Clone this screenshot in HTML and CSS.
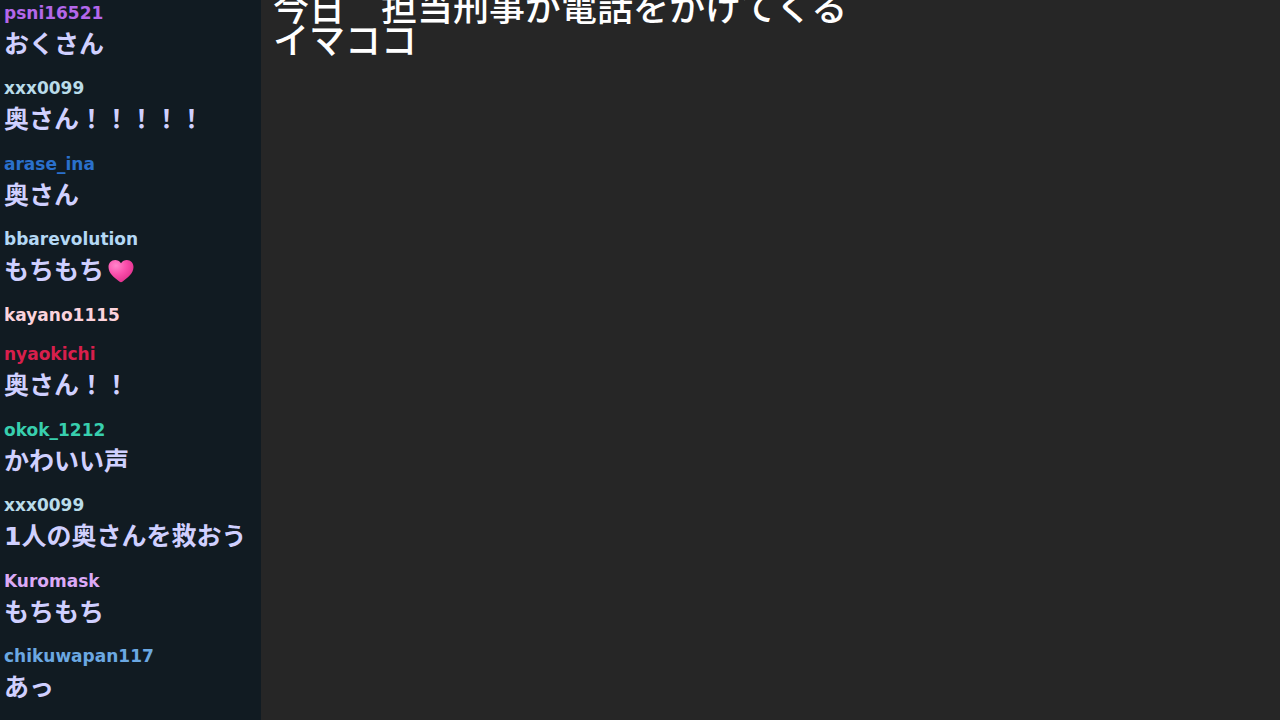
FILE: index.html
```html
<!DOCTYPE html>
<html lang="ja">
<head>
  <meta charset="UTF-8">
  <meta name="viewport" content="width=device-width, initial-scale=1.0">
  <title>配信チャット</title>
  <link rel="stylesheet" href="styles.css">
</head>
<body>
  <ul class="chat">
    <li>
      <span class="name purple">psni16521</span>
      <p>おくさん</p>
    </li>
    <li>
      <span class="name pale">xxx0099</span>
      <p>奥さん！！！！！</p>
    </li>
    <li>
      <span class="name blue">arase_ina</span>
      <p>奥さん</p>
    </li>
    <li>
      <span class="name pale-blue">bbarevolution</span>
      <p>もちもち<svg class="heart" viewBox="0 0 26 24" role="img" aria-label="ハート">
        <defs>
          <radialGradient id="pink" cx="0.3" cy="0.25" r="0.8">
            <stop offset="0" stop-color="#ff86cb"/>
            <stop offset="0.5" stop-color="#fb4fac"/>
            <stop offset="1" stop-color="#e02f8c"/>
          </radialGradient>
        </defs>
        <path fill="url(#pink)" d="M13 4.200C11.500 1.900 9.500 1 7.200 1C3.300 1 .5 4 .5 8C.5 14.500 6.500 18.500 11.300 22.600Q13 24 14.700 22.600C19.500 18.500 25.500 14.500 25.500 8C25.500 4 22.700 1 18.800 1C16.500 1 14.500 1.900 13 4.200Z"/>
      </svg></p>
    </li>
    <li>
      <span class="name pink">kayano1115</span>
    </li>
    <li>
      <span class="name red">nyaokichi</span>
      <p>奥さん！！</p>
    </li>
    <li>
      <span class="name green">okok_1212</span>
      <p>かわいい声</p>
    </li>
    <li>
      <span class="name pale">xxx0099</span>
      <p>1人の奥さんを救おう</p>
    </li>
    <li>
      <span class="name lilac">Kuromask</span>
      <p>もちもち</p>
    </li>
    <li>
      <span class="name sky">chikuwapan117</span>
      <p>あっ</p>
    </li>
  </ul>

  <main class="memo">
    <p>今日　担当刑事が電話をかけてくる<br>イマココ</p>
  </main>
</body>
</html>
```
FILE: styles.css
```css
* {
  box-sizing: border-box;
}
body {
  display: flex;
  height: 100vh;
  margin: 0;
  overflow: hidden;
  background-color: #262626;
  font-family: "DejaVu Sans", "Noto Sans CJK JP", sans-serif;
}
p {
  margin: 0;
}

.chat {
  display: flex;
  flex-direction: column;
  justify-content: space-between;
  flex: 0 0 261px;
  margin: 0;
  padding: 0 4px 14px;
  list-style: none;
  background-color: #111b22;
  color: #d0d0ff;
  font-weight: bold;
}
.chat p {
  font-size: 25px;
  line-height: 36px;
  white-space: nowrap;
}
.name {
  display: block;
  font-size: 17px;
  line-height: 27px;
}
.heart {
  width: 26px;
  height: 24px;
  margin-left: 4px;
  vertical-align: -4px;
}

.purple { color: #b467ea; }
.pale { color: #b9dcea; }
.blue { color: #2a70cc; }
.pale-blue { color: #b4d8f4; }
.pink { color: #fbd3dc; }
.red { color: #d81f4c; }
.green { color: #38cfae; }
.lilac { color: #dcaaf6; }
.sky { color: #6ba8e2; }

/* 上の行はスクロールで切れている */
.memo {
  flex: 1;
  margin-top: -11px;
  padding: 0 12px;
  color: #fff;
  font-family: "Noto Sans CJK JP", sans-serif;
  font-size: 36px;
  font-weight: 500;
  line-height: 33px;
  white-space: nowrap;
}
```
